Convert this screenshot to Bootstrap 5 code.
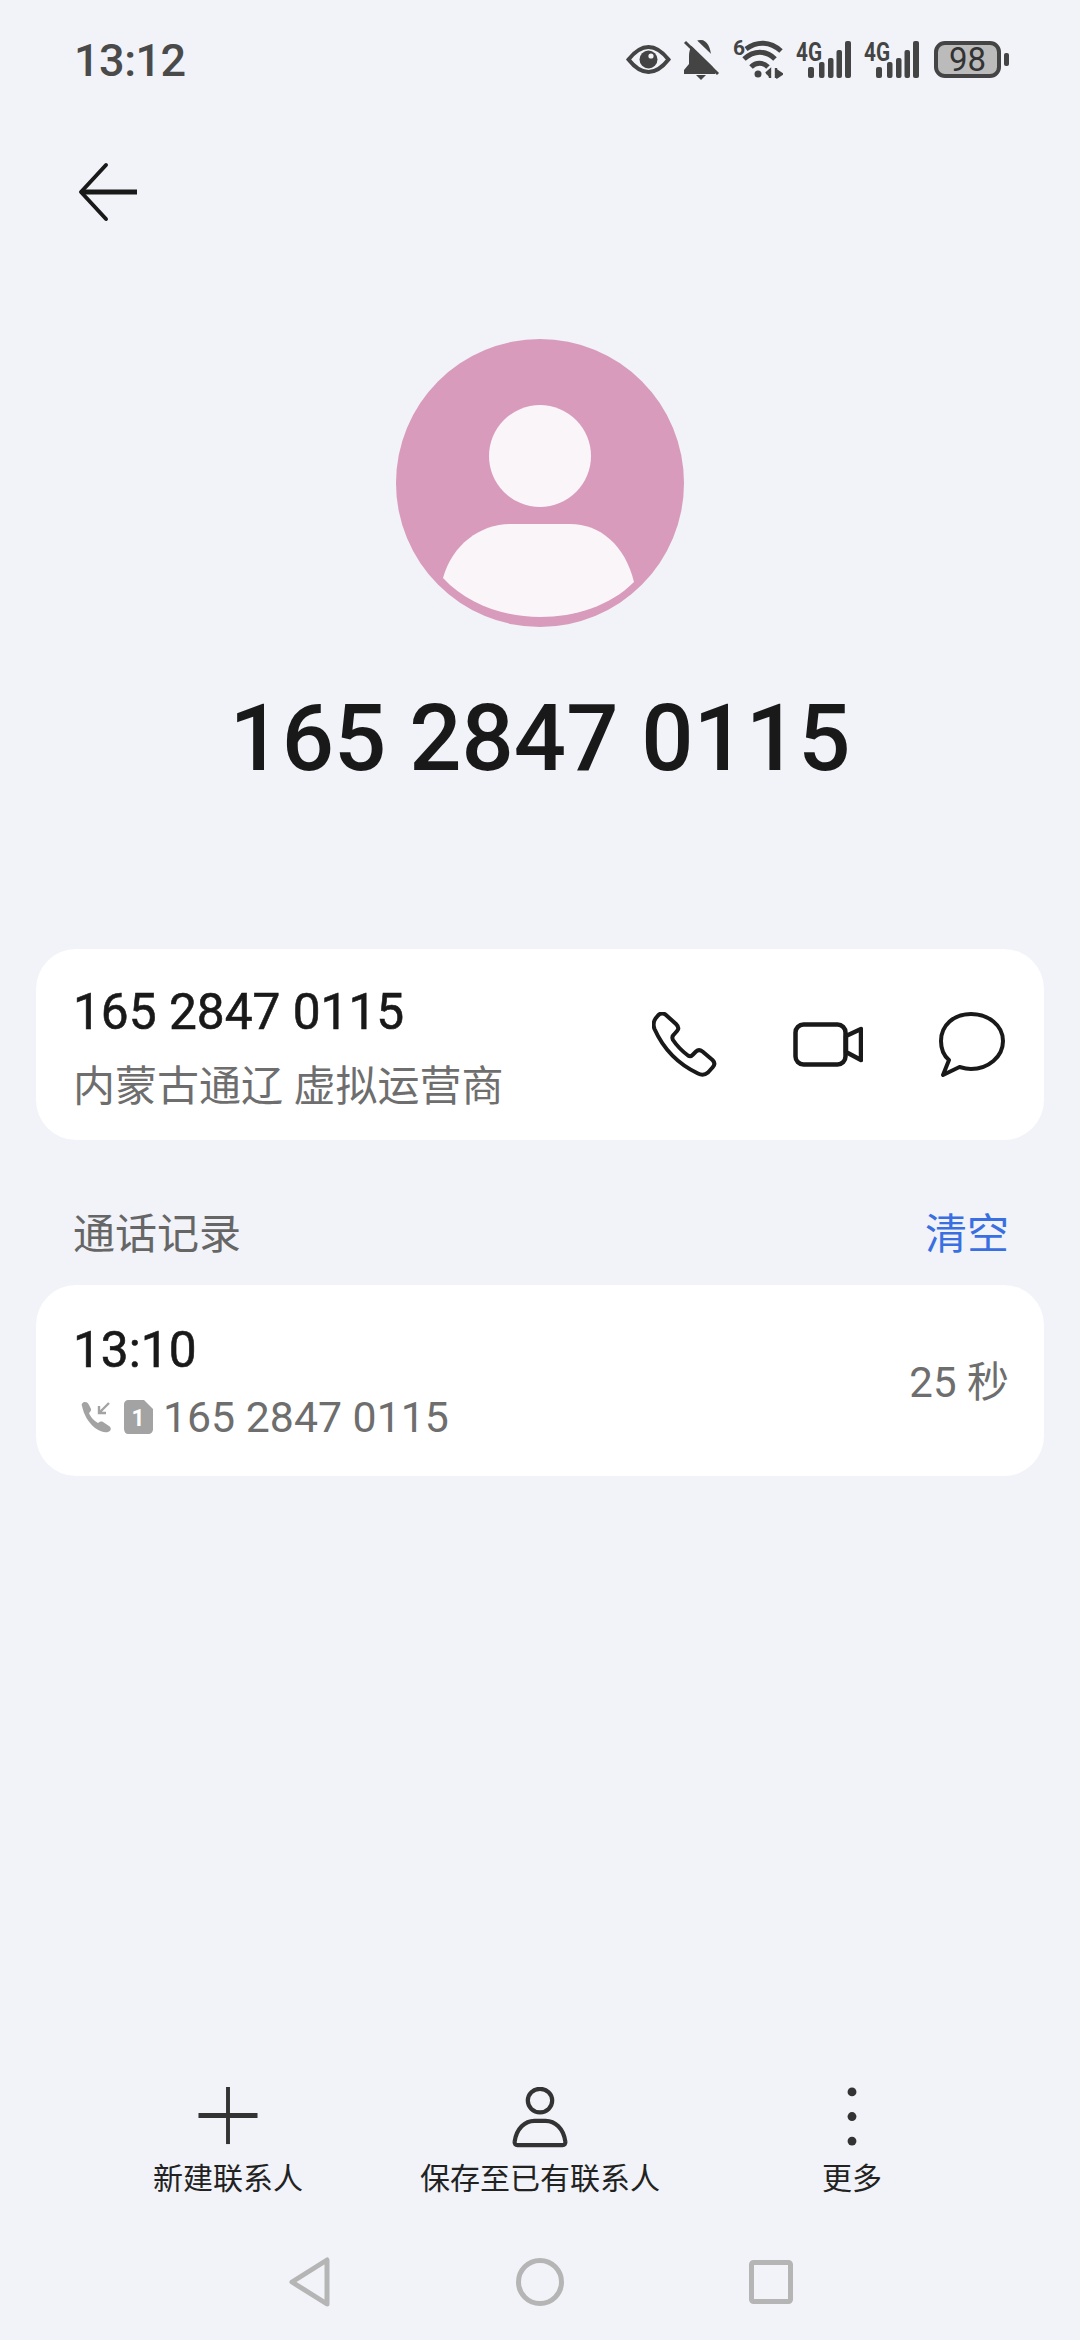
<!DOCTYPE html>
<html lang="zh">
<head>
    <meta charset="UTF-8">
    <title>通话详情</title>
    <link href="https://cdn.jsdelivr.net/npm/bootstrap@5.3.0/dist/css/bootstrap.min.css" rel="stylesheet">
    <style>
        html, body { height: 2340px; }
        body { background: #f1f3f8; color: #191919; font-family: Roboto, "Noto Sans CJK SC", sans-serif; }
        .screen { height: 2340px; }
        .status-bar { height: 120px; padding: 0 71px 0 74px; }
        .status-time { font-size: 45px; font-weight: 500; color: #4a4a4a; line-height: 1; letter-spacing: -0.5px; }
        .status-icons { gap: 12px; }
        .back-row { height: 144px; padding-left: 78px; }
        .avatar-pic { margin-top: 75px; }
        .caller-number { margin: 62px 0 160px; font-size: 92px; font-weight: 500; line-height: 100px; }
        .info-card { margin: 0 36px; height: 191px; border: 0; border-radius: 40px; }
        .info-body { padding: 38px 35px 0 37px; }
        .call-body { padding-top: 40px; }
        .main-line { font-size: 49.6px; font-weight: 400; line-height: 50px; -webkit-text-stroke: 0.6px #191919; }
        .sub-line { font-size: 42px; line-height: 50px; color: #6e6e6e; margin-top: 25px; }
        .call-body .sub-line { margin-top: 17px; font-size: 42.8px; }
        .action-icons { gap: 76px; margin-right: 4px; }
        .section-row { padding: 70px 71px 25px 73px; font-size: 42px; line-height: 50px; color: #666; }
        .clear-link { color: #3a6fe2; text-decoration: none; }
        .duration { font-size: 42px; color: #6e6e6e; }
        .sim-icons { gap: 12px; margin-left: 8px; margin-right: 10px; }
        .toolbar { padding: 0 72px; margin-bottom: 27px; }
        .tool-item { width: 312px; height: 110px; }
        .tool-label { font-size: 30px; line-height: 36px; color: #222; margin-top: 13px; }
        .nav-keys { height: 116px; padding-left: 289px; gap: 184.5px; }
    </style>
</head>
<body>

<div class="screen d-flex flex-column">
    <div class="status-bar d-flex justify-content-between align-items-center">
        <span class="status-time">13:12</span>
        <div class="status-icons d-flex align-items-center">
            <svg width="45" height="52" viewBox="626 34 45 52">
                <path d="M628.5 59.5C636 50 642 47 648.5 47C655 47 661 50 668.5 59.5C661 69 655 72 648.5 72C642 72 636 69 628.5 59.5Z" fill="none" stroke="#444" stroke-width="4"/>
                <circle cx="648.5" cy="59.5" r="9" fill="#444"/>
                <circle cx="651" cy="56" r="2.6" fill="#f1f3f8"/>
            </svg>
            <svg width="37" height="52" viewBox="684 34 37 52">
                <path d="M702 40C694 40 690 48 690 56V64L685 70V74H716V70L712 64V56C712 48 708 40 702 40Z" fill="#444"/>
                <path d="M697 75H707L702 80Z" fill="#444"/>
                <path d="M692 40L724 71" stroke="#f1f3f8" stroke-width="8"/>
                <path d="M686 42L719 74" stroke="#444" stroke-width="3"/>
            </svg>
            <svg width="51" height="52" viewBox="732 34 51 52">
                <text x="733" y="55" font-family="Roboto" font-size="21" font-weight="700" fill="#444">6</text>
                <path d="M746 49C757 41 770 41 781 51" fill="none" stroke="#444" stroke-width="5"/>
                <path d="M744 59C754 50 766 50 775 59" fill="none" stroke="#444" stroke-width="5"/>
                <path d="M751 67C756 62 763 62 768 67" fill="none" stroke="#444" stroke-width="5"/>
                <circle cx="758" cy="74" r="3.5" fill="#444"/>
                <path d="M770 78V70L766 73.5M776 68V78M776 70L782 74L776 78" fill="#444" stroke="#444" stroke-width="2.4"/>
            </svg>
            <svg width="56" height="52" viewBox="794 34 56 52">
                <text x="795" y="61" font-family="Roboto" font-size="26" font-weight="700" fill="#444" textLength="26" lengthAdjust="spacingAndGlyphs">4G</text>
                <rect x="807" y="67" width="6" height="11" rx="2" fill="#444"/>
                <rect x="818" y="62" width="5.5" height="16" rx="2" fill="#444"/>
                <rect x="827" y="58" width="5.5" height="20" rx="2" fill="#444"/>
                <rect x="835.5" y="50" width="5.5" height="28" rx="2" fill="#444"/>
                <rect x="844" y="41" width="6" height="37" rx="2" fill="#444"/>
            </svg>
            <svg width="56" height="52" viewBox="794 34 56 52">
                <text x="795" y="61" font-family="Roboto" font-size="26" font-weight="700" fill="#444" textLength="26" lengthAdjust="spacingAndGlyphs">4G</text>
                <rect x="807" y="67" width="6" height="11" rx="2" fill="#444"/>
                <rect x="818" y="62" width="5.5" height="16" rx="2" fill="#444"/>
                <rect x="827" y="58" width="5.5" height="20" rx="2" fill="#444"/>
                <rect x="835.5" y="50" width="5.5" height="28" rx="2" fill="#444"/>
                <rect x="844" y="41" width="6" height="37" rx="2" fill="#444"/>
            </svg>
            <svg width="78" height="52" viewBox="931 34 78 52">
                <rect x="936" y="43" width="63" height="33" rx="9" fill="#bbb" stroke="#444" stroke-width="4"/>
                <text x="967.5" y="71" text-anchor="middle" font-family="Roboto" font-size="33" fill="#333">98</text>
                <rect x="1004" y="53" width="5" height="13" rx="2" fill="#444"/>
            </svg>
        </div>
    </div>

    <div class="back-row d-flex align-items-center">
        <svg width="62" height="60" viewBox="78 162 62 60" fill="none" stroke="#191919" stroke-linecap="round" stroke-linejoin="round">
            <path d="M106 165L81 192L106 219" stroke-width="4"/>
            <path d="M82 192H137" stroke-width="5" stroke-linecap="butt"/>
        </svg>
    </div>

    <div class="text-center">
        <svg class="avatar-pic" width="288" height="288" viewBox="396 339 288 288">
            <circle cx="540" cy="483" r="144" fill="#d89bbb"/>
            <circle cx="540" cy="456" r="51" fill="#faf5f8"/>
            <path d="M443 578C452 545 480 524 510 524H570C600 524 625 545 634 582C610 606 575 617 540 617C505 617 468 605 443 578Z" fill="#faf5f8"/>
        </svg>
        <h1 class="caller-number">165 2847 0115</h1>
    </div>

    <div class="card info-card">
        <div class="info-body d-flex justify-content-between">
            <div>
                <div class="main-line">165 2847 0115</div>
                <div class="sub-line">内蒙古通辽 虚拟运营商</div>
            </div>
            <div class="action-icons d-flex align-items-center" style="height: 114px">
                <svg width="65" height="65" viewBox="0 0 65 65" fill="none" stroke="#191919" stroke-width="4" stroke-linejoin="round">
                    <path d="M6 3.5C8.5 1 11.5 1 14 3L24 12C27 15 27 17 25 19L21.5 23C20 24.5 20 26 21 28C25 34 30 39 36 43.5C37.5 44.5 39 44.5 40.5 43L44 39.5C46 37.5 48 37.5 50.5 39.5L60.5 48C63 50.5 63 53 60.5 55.5L56 60.5C53 63 50 63.5 46 61.5C26 52 11 36 2.5 17C1 13 1.5 9.5 3.5 6.5Z"/>
                </svg>
                <svg width="70" height="45" viewBox="0 0 70 45" fill="none" stroke="#191919" stroke-width="4.5" stroke-linejoin="round">
                    <rect x="2.5" y="2.5" width="50" height="40" rx="8"/>
                    <path d="M53 14L68 7V38L53 30Z"/>
                </svg>
                <svg width="66" height="65" viewBox="0 0 66 65" fill="none" stroke="#191919" stroke-width="4" stroke-linejoin="round">
                    <path d="M10 48C4 43 2 36 2 29C2 13 15 2 32 2C49 2 64 13 64 29C64 45 49 57 32 57C28 57 24 56 20.5 55L4 63Z"/>
                </svg>
            </div>
        </div>
    </div>

    <div class="section-row d-flex justify-content-between">
        <span>通话记录</span>
        <a class="clear-link" href="#">清空</a>
    </div>

    <div class="card info-card">
        <div class="info-body call-body d-flex justify-content-between">
            <div>
                <div class="main-line">13:10</div>
                <div class="sub-line d-flex align-items-center">
                    <span class="sim-icons d-flex align-items-center">
                        <svg width="31" height="32" viewBox="0 0 31 32">
                            <path d="M1 5C0 3 2 1 4 1C6 1 7 2 8 4L10 8C10.500 9.500 9 11 8 12C9 15 13 20 17 22C18.500 21 20 20 22 21L28 25C31 27 30 30 27 31C24 32 20 31 14 27C7 21 3 14 1 5Z" fill="#a3a3a3"/>
                            <path d="M28 2L18 12M18 5V12H25" fill="none" stroke="#a3a3a3" stroke-width="2.4"/>
                        </svg>
                        <svg width="29" height="34" viewBox="0 0 29 34">
                            <path d="M4 0H20L29 9V29C29 32 27 34 24 34H4C2 34 0 32 0 29V4C0 2 2 0 4 0Z" fill="#a3a3a3"/>
                            <text x="14" y="26" text-anchor="middle" font-family="Roboto" font-size="23" font-weight="700" fill="#fff">1</text>
                        </svg>
                    </span>
                    <span>165 2847 0115</span>
                </div>
            </div>
            <div class="duration d-flex align-items-center" style="height: 114px">25 秒</div>
        </div>
    </div>

    <div class="flex-grow-1"></div>

    <div class="toolbar d-flex">
        <div class="tool-item d-flex flex-column align-items-center justify-content-end">
            <svg width="60" height="62" viewBox="0 0 60 62" stroke="#333">
                <path d="M30 0V58" stroke-width="4"/>
                <path d="M0 29H60" stroke-width="5"/>
            </svg>
            <div class="tool-label">新建联系人</div>
        </div>
        <div class="tool-item d-flex flex-column align-items-center justify-content-end">
            <svg width="60" height="65" viewBox="510 2084 60 65" fill="none" stroke="#333" stroke-width="4.5">
                <ellipse cx="540" cy="2098.500" rx="13" ry="12.500"/>
                <path d="M516 2146H564C566 2146 567.500 2144.500 567 2142C565 2128 556 2120 546 2120H534C524 2120 515 2128 513 2142C512.500 2144.500 514 2146 516 2146Z"/>
            </svg>
            <div class="tool-label">保存至已有联系人</div>
        </div>
        <div class="tool-item d-flex flex-column align-items-center justify-content-end">
            <svg width="10" height="62" viewBox="0 0 10 62" fill="#333">
                <circle cx="5" cy="5" r="4.500"/>
                <circle cx="5" cy="30" r="4.500"/>
                <circle cx="5" cy="55" r="4.500"/>
            </svg>
            <div class="tool-label">更多</div>
        </div>
    </div>

    <div class="nav-keys d-flex align-items-center">
        <svg width="42.5" height="50" viewBox="0 0 42.5 50" fill="none" stroke="#b5b5b5" stroke-width="5" stroke-linejoin="round">
            <path d="M38 3V47L3 25Z"/>
        </svg>
        <svg width="48" height="48" viewBox="0 0 48 48" fill="none" stroke="#b5b5b5" stroke-width="5">
            <circle cx="24" cy="24" r="21.500"/>
        </svg>
        <svg width="44" height="44" viewBox="0 0 44 44" fill="none" stroke="#b5b5b5" stroke-width="5" stroke-linejoin="round">
            <rect x="2.500" y="2.500" width="39" height="39" rx="2"/>
        </svg>
    </div>
</div>

<script src="https://cdn.jsdelivr.net/npm/bootstrap@5.3.0/dist/js/bootstrap.bundle.min.js"></script>
</body>
</html>
